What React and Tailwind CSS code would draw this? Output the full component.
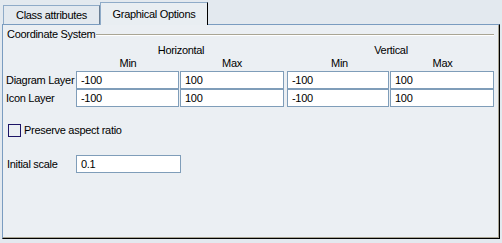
export default function App() {
  const field =
    "h-[18px] shrink-0 border border-[#7f9db9] bg-white px-[4px] text-[11px] leading-[16px] text-black";
  return (
    <div
      className="w-[502px] h-[243px] bg-[#e3e9ef] pt-[2px] px-[2px] text-[11px] tracking-[-0.3px] text-black"
      style={{ fontFamily: '"Liberation Sans", Arial, sans-serif' }}
    >
      {/* tabs */}
      <div className="flex items-end h-[22px] pl-[1px]">
        <div className="h-[19px] w-[97px] border-t border-l border-[#8fabc8] border-r border-r-[#6a7f95] bg-[#e3e9ef] flex items-center justify-center pt-[1px]">
          Class attributes
        </div>
        <div className="h-[23px] w-[108px] border-t border-l border-[#8fabc8] border-r border-r-black bg-[#e9eef2] flex items-center justify-center -mb-[1px] relative z-10 pt-[1px]">
          Graphical Options
        </div>
      </div>
      {/* panel */}
      <div className="w-[498px] h-[215px] border-t border-l border-[#7a9cc0] border-r border-b border-r-black border-b-black shadow-[inset_-1px_-1px_0_#a9a594] bg-[#ebeff3] flex flex-col">
        {/* group title */}
        <div className="flex items-center h-[19px] pl-[4px] pr-[5px]">
          <span className="leading-[13px] whitespace-nowrap">Coordinate System</span>
          <div className="flex-1 ml-[1px] h-[2px] border-t border-[#a9a594] border-b border-b-white" />
        </div>
        {/* headers */}
        <div className="flex h-[13px] items-center">
          <div className="w-[73px] shrink-0" />
          <div className="w-[208px] text-center pl-[2px]">Horizontal</div>
          <div className="w-[4px]" />
          <div className="w-[206px] text-center">Vertical</div>
        </div>
        <div className="flex h-[13px] items-center">
          <div className="w-[73px] shrink-0" />
          <div className="w-[104px] text-center">Min</div>
          <div className="w-[104px] text-center">Max</div>
          <div className="w-[4px]" />
          <div className="w-[103px] text-center">Min</div>
          <div className="w-[103px] text-center">Max</div>
        </div>
        {/* rows */}
        <div className="flex flex-col mt-[1px]">
          <div className="flex items-center h-[18px]">
            <div className="w-[73px] shrink-0 pl-[3px] whitespace-nowrap">Diagram Layer</div>
            <div className={`${field} w-[103px]`}>-100</div>
            <div className="w-[1px] shrink-0" />
            <div className={`${field} w-[104px]`}>100</div>
            <div className="w-[3px] shrink-0" />
            <div className={`${field} w-[102px]`}>-100</div>
            <div className="w-[1px] shrink-0" />
            <div className={`${field} w-[104px]`}>100</div>
          </div>
          <div className="flex items-center h-[18px]">
            <div className="w-[73px] shrink-0 pl-[3px] whitespace-nowrap">Icon Layer</div>
            <div className={`${field} w-[103px]`}>-100</div>
            <div className="w-[1px] shrink-0" />
            <div className={`${field} w-[104px]`}>100</div>
            <div className="w-[3px] shrink-0" />
            <div className={`${field} w-[102px]`}>-100</div>
            <div className="w-[1px] shrink-0" />
            <div className={`${field} w-[104px]`}>100</div>
          </div>
        </div>
        {/* checkbox */}
        <div className="flex items-center h-[14px] mt-[16px] pl-[5px]">
          <div className="w-[13px] h-[13px] border border-[#1c1466] bg-[#ebeff3]" />
          <span className="ml-[3px]">Preserve aspect ratio</span>
        </div>
        {/* initial scale */}
        <div className="flex items-center h-[18px] mt-[18px]">
          <div className="w-[73px] shrink-0 pl-[4px] whitespace-nowrap">Initial scale</div>
          <div className={`${field} w-[105px]`}>0.1</div>
        </div>
      </div>
    </div>
  );
}
